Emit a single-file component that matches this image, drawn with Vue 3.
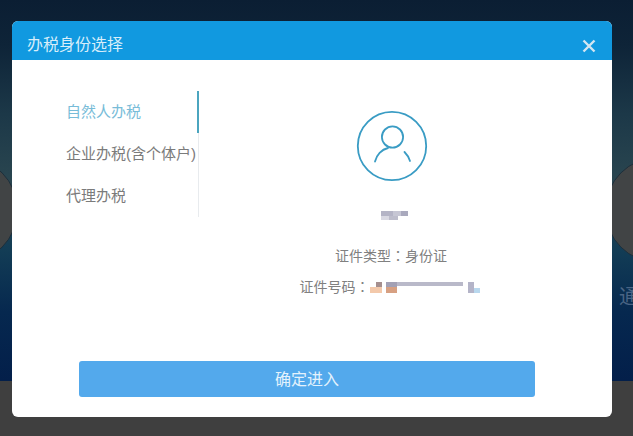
<script setup>
const tabs = [
  { name: "自然人办税", active: true },
  { name: "企业办税(含个体户)", active: false },
  { name: "代理办税", active: false },
];
</script>

<template>
  <div class="page">
    <div class="backdrop">
      <div class="scene">
        <div class="ring ring-left"></div>
        <div class="ring ring-right"></div>
        <span class="scene-text">通</span>
      </div>
      <div class="footer-band"></div>
    </div>

    <div class="dialog">
      <div class="dialog-head">
        <span class="dialog-title">办税身份选择</span>
        <svg class="close" width="14" height="14" viewBox="0 0 14 14">
          <path d="M1.5 1.5L12.5 12.5M12.5 1.5L1.5 12.5" stroke="#d3e6f2" stroke-width="2.4" fill="none" />
        </svg>
      </div>

      <div class="dialog-body">
        <ul class="tabs">
          <li v-for="tab in tabs" :key="tab.name" class="tab" :class="{ active: tab.active }">{{ tab.name }}</li>
        </ul>

        <div class="info">
          <svg class="avatar" width="72" height="72" viewBox="0 0 72 72" fill="none">
            <circle cx="36" cy="36" r="34.2" stroke="#3a9cc4" stroke-width="1.8" />
            <circle cx="36.5" cy="27" r="10.6" stroke="#3a9cc4" stroke-width="1.8" />
            <path d="M19 51.5C20.5 45 25.5 39.5 32 38" stroke="#3a9cc4" stroke-width="1.8" stroke-linecap="round" />
            <path d="M48.5 42C51 44.5 53 47.5 54 51" stroke="#3a9cc4" stroke-width="1.8" stroke-linecap="round" />
          </svg>

          <div class="name-mask">
            <i class="m1"></i><i class="m2"></i>
          </div>

          <p class="line type-line">证件类型<span class="colon">：</span>身份证</p>
          <div class="line number-line">
            <span class="num-label">证件号码<span class="colon">：</span></span>
            <span class="num-mask">
              <i class="n1"></i><i class="n2"></i><i class="n3"></i><i class="n4"></i>
            </span>
          </div>
        </div>
      </div>

      <div class="dialog-foot">
        <button class="confirm">确定进入</button>
      </div>
    </div>
  </div>
</template>

<style>
html,
body {
  margin: 0;
  background: #3f3f3f;
}
</style>

<style scoped>
.page {
  position: relative;
  width: 633px;
  height: 436px;
  overflow: hidden;
  padding: 21px 21px 19px 12px;
  box-sizing: border-box;
  font-family: "Liberation Sans", "Noto Sans CJK SC", sans-serif;
}

.backdrop {
  position: absolute;
  inset: 0;
  display: flex;
  flex-direction: column;
}

.scene {
  position: relative;
  height: 381px;
  overflow: hidden;
  background: linear-gradient(180deg, #0b1e33 0%, #0e2438 12%, #1c3848 30%, #2a4650 48%, #123c55 66%, #06284f 82%, #031f4a 100%);
}

.footer-band {
  flex: 1;
  background: #3f3f3f;
}

.ring {
  position: absolute;
  top: 157px;
  width: 106px;
  height: 106px;
  border-radius: 50%;
  background: #414445;
  border: 1px solid #1d2f3c;
  box-sizing: border-box;
}

.ring-left {
  left: -88px;
}

.ring-right {
  left: 605px;
}

.scene-text {
  position: absolute;
  left: 619px;
  top: 281px;
  color: #4a6484;
  font-size: 20px;
}

.dialog {
  position: relative;
  width: 600px;
  height: 396px;
  display: flex;
  flex-direction: column;
  background: #fff;
  border-radius: 6px;
  overflow: hidden;
}

.dialog-head {
  height: 39px;
  flex-shrink: 0;
  display: flex;
  align-items: center;
  justify-content: space-between;
  padding: 0 16px 0 15px;
  background: #1199e0;
}

.dialog-title {
  margin-top: 4px;
  color: #d8eefa;
  font-size: 16px;
}

.close {
  margin-top: 10px;
}

.dialog-body {
  flex: 1;
  display: flex;
  padding-top: 31px;
}

.tabs {
  list-style: none;
  margin: 0 0 0 37px;
  padding: 0;
  width: 149px;
  height: 126px;
  border-right: 1px solid #e8ebee;
}

.tab {
  position: relative;
  height: 42px;
  line-height: 42px;
  padding-left: 17px;
  font-size: 15px;
  color: #7b7b7b;
  white-space: nowrap;
}

.tab.active {
  color: #78bcd8;
}

.tab.active::after {
  content: "";
  position: absolute;
  right: -1px;
  top: 0;
  width: 2px;
  height: 42px;
  background: #4ba5bf;
}

.info {
  width: 388px;
  display: flex;
  flex-direction: column;
  align-items: center;
  padding-top: 19px;
  margin-left: -1px;
}

.avatar {
  display: block;
}

.name-mask {
  display: flex;
  flex-direction: column;
  width: 27px;
  height: 9px;
  margin-top: 29px;
  margin-left: 4px;
  filter: blur(0.5px);
}

.name-mask i {
  display: block;
}

.name-mask .m1 {
  height: 5px;
  background: linear-gradient(90deg, #b4b4c6 0 45%, #c6c6d4 45% 75%, #a9a9bd 75%);
}

.name-mask .m2 {
  width: 17px;
  height: 4px;
  background: linear-gradient(90deg, #d9d9e3 0 50%, #bdbdcc 50%);
}

.line {
  margin: 0;
  font-size: 14px;
  color: #808080;
}

.colon {
  font-family: "Noto Sans CJK TC", sans-serif;
}

.type-line {
  margin-top: 26px;
  margin-right: 2px;
  line-height: 18px;
}

.number-line {
  display: flex;
  align-items: center;
  margin-top: 12px;
  margin-right: 2px;
  line-height: 18px;
  width: 183px;
}

.num-label {
  width: 70px;
  flex-shrink: 0;
}

.num-mask {
  display: flex;
  align-items: flex-start;
  height: 11px;
  margin-top: 1px;
  filter: blur(0.5px);
}

.num-mask i {
  display: block;
}

.num-mask .n1 {
  width: 12px;
  height: 11px;
  background:
    linear-gradient(#a58f8e, #a58f8e) right top / 6px 5px no-repeat,
    linear-gradient(#f3c9ab, #f3c9ab) left bottom / 12px 6px no-repeat;
}

.num-mask .n2 {
  width: 11px;
  height: 11px;
  margin-left: 4px;
  background: linear-gradient(180deg, #a3a1b5 0 50%, #d7a082 50%);
}

.num-mask .n3 {
  width: 66px;
  height: 4px;
  background: #b9b9c9;
}

.num-mask .n4 {
  width: 12px;
  height: 11px;
  margin-left: 5px;
  background:
    linear-gradient(#b9d8ee, #b9d8ee) right bottom / 6px 5px no-repeat,
    linear-gradient(#b4b4c8, #b4b4c8) left top / 6px 11px no-repeat;
}

.dialog-foot {
  display: flex;
  justify-content: center;
  padding-bottom: 20px;
  padding-right: 10px;
}

.confirm {
  width: 456px;
  height: 36px;
  border: none;
  border-radius: 3px;
  background: #53a9ec;
  color: #e3f2fc;
  font-size: 16px;
  font-family: inherit;
  padding: 0 0 2px;
}
</style>
